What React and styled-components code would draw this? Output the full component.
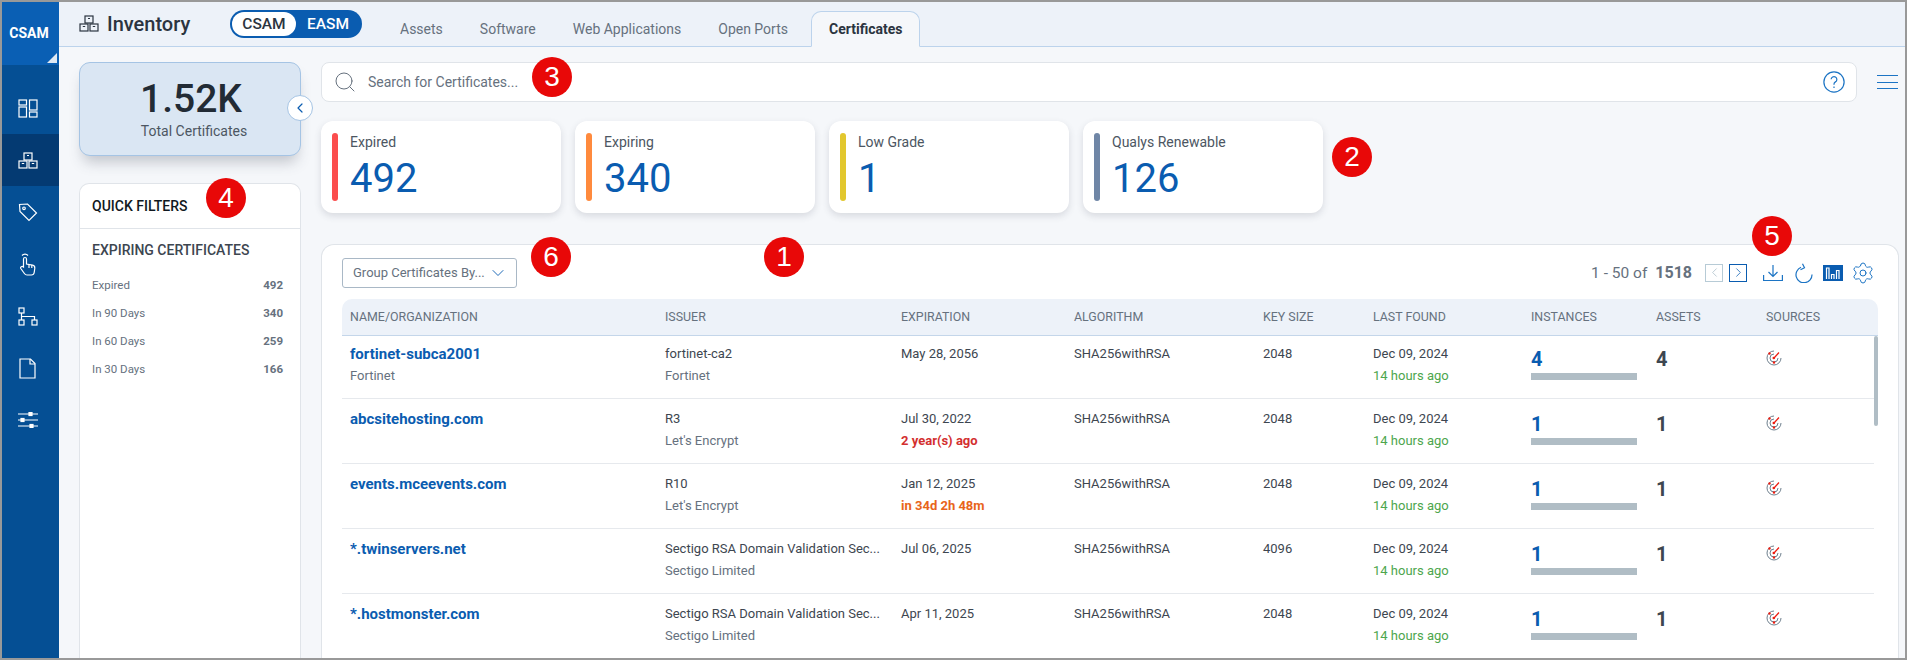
// App.jsx
import React from "react";
import styled, { createGlobalStyle } from "styled-components";
import { ChevronDown, ChevronLeft, ChevronRight, Search, Settings } from "lucide-react";

const GlobalStyle = createGlobalStyle`
  html, body {
    margin: 0;
    padding: 0;
    background: #fff;
  }
  * {
    box-sizing: border-box;
  }
`;

const Frame = styled.div`
  position: relative;
  display: flex;
  width: 1907px;
  height: 660px;
  border: 2px solid #999;
  overflow: hidden;
  font-family: Roboto, "Liberation Sans", sans-serif;
  color: #3d4650;
  background: #f5f7fa;
`;

const Sidebar = styled.aside`
  flex: 0 0 57px;
  display: flex;
  flex-direction: column;
  background: #054f94;
`;

const Brand = styled.div`
  position: relative;
  height: 63px;
  margin-bottom: 17px;
  padding-right: 3px;
  padding-bottom: 2px;
  display: flex;
  align-items: center;
  justify-content: center;
  background: #0a5fb4;
  color: #fff;
  font-size: 14px;
  font-weight: 700;
`;

const BrandCorner = styled.span`
  position: absolute;
  right: 2px;
  bottom: 2px;
  width: 0;
  height: 0;
  border-style: solid;
  border-width: 0 0 10px 10px;
  border-color: transparent transparent #dfe8f2 transparent;
`;

const NavItem = styled.div`
  height: 52px;
  padding-right: 6px;
  display: flex;
  align-items: center;
  justify-content: center;
  color: #fff;
  background: ${({ $active }) => ($active ? "#043a72" : "transparent")};
`;

const Content = styled.div`
  flex: 1;
  min-width: 0;
  display: flex;
  flex-direction: column;
`;

const TopBar = styled.header`
  flex: 0 0 45px;
  display: flex;
  align-items: flex-end;
  padding-left: 20px;
  background: #edf2f9;
  border-bottom: 1px solid #bcd3ec;
`;

const PageTitle = styled.div`
  display: flex;
  align-items: center;
  gap: 8px;
  height: 44px;
  padding-bottom: 1px;
  width: 151px;
  font-size: 20px;
  font-weight: 500;
  color: #2b3440;
`;

const Toggle = styled.div`
  display: flex;
  align-items: center;
  align-self: flex-start;
  margin-top: 8px;
  width: 132px;
  height: 28px;
  padding: 2px;
  border-radius: 14px;
  background: #0a5cb0;
  font-size: 15.5px;
  font-weight: 500;
`;

const ToggleOption = styled.span`
  width: 64px;
  height: 24px;
  display: flex;
  align-items: center;
  justify-content: center;
  border-radius: 12px;
  background: ${({ $on }) => ($on ? "#fff" : "transparent")};
  color: ${({ $on }) => ($on ? "#2b3440" : "#fff")};
`;

const Tabs = styled.nav`
  display: flex;
  align-items: flex-end;
  margin-left: 20px;
  margin-bottom: -1px;
`;

const Tab = styled.div`
  height: 36px;
  padding: 0 17px 1px;
  margin-right: 1px;
  margin-left: ${({ $active }) => ($active ? "4px" : "0")};
  display: flex;
  align-items: center;
  font-size: 14px;
  color: ${({ $active }) => ($active ? "#2b3440" : "#66717e")};
  font-weight: ${({ $active }) => ($active ? 700 : 400)};
  background: ${({ $active }) => ($active ? "#f5f7fa" : "transparent")};
  border: 1px solid ${({ $active }) => ($active ? "#bcd3ec" : "transparent")};
  border-bottom-color: ${({ $active }) => ($active ? "#f5f7fa" : "transparent")};
  border-radius: 10px 10px 0 0;
`;

const Body = styled.div`
  flex: 1;
  min-height: 0;
  display: flex;
  padding: 15px 0 0 20px;
`;

const LeftColumn = styled.div`
  flex: 0 0 222px;
  display: flex;
  flex-direction: column;
`;

const TotalCard = styled.div`
  position: relative;
  height: 94px;
  margin-bottom: 27px;
  display: flex;
  flex-direction: column;
  align-items: center;
  border: 1px solid #a5c4e4;
  border-radius: 11px;
  background: #dae6f3;
  box-shadow: 0 10px 14px -4px rgba(60, 70, 85, 0.28);
`;

const TotalValue = styled.div`
  margin: 15px 0 0 2px;
  font-size: 39px;
  line-height: 42px;
  font-weight: 500;
  color: #222b35;
`;

const TotalLabel = styled.div`
  margin: 3px 0 0 8px;
  font-size: 14px;
  color: #4c5662;
`;

const CollapseButton = styled.button`
  position: absolute;
  right: -13px;
  top: 32px;
  width: 26px;
  height: 26px;
  padding: 0;
  display: flex;
  align-items: center;
  justify-content: center;
  border: 1px solid #a5c4e4;
  border-radius: 50%;
  background: #fff;
  color: #0a5cb0;
`;

const FilterPanel = styled.section`
  flex: 1;
  background: #fff;
  border: 1px solid #e0e4e9;
  border-bottom: none;
  border-radius: 10px 10px 0 0;
`;

const FilterHeader = styled.div`
  height: 45px;
  padding: 0 12px 1px;
  display: flex;
  align-items: center;
  border-bottom: 1px solid #e0e4e9;
  font-size: 14px;
  font-weight: 500;
  color: #101820;
`;

const FilterGroup = styled.div`
  padding: 12px 12px 0;
`;

const FilterTitle = styled.div`
  margin-bottom: 12px;
  font-size: 14px;
  line-height: 18px;
  font-weight: 500;
  color: #3d4650;
`;

const FilterRow = styled.div`
  height: 28px;
  padding-right: 5px;
  display: flex;
  align-items: center;
  justify-content: space-between;
  font-size: 11.5px;
  color: #66717e;
`;

const FilterCount = styled.span`
  font-weight: 700;
`;

const MainColumn = styled.div`
  flex: 1;
  min-width: 0;
  margin-left: 20px;
  display: flex;
  flex-direction: column;
`;

const SearchRow = styled.div`
  display: flex;
  align-items: center;
  height: 40px;
`;

const SearchBar = styled.div`
  width: 1536px;
  height: 40px;
  padding: 0 11px;
  display: flex;
  align-items: center;
  background: #fff;
  border: 1px solid #e0e4e9;
  border-radius: 8px;
  color: #66717e;
`;

const Placeholder = styled.span`
  flex: 1;
  margin-left: 11px;
  font-size: 14px;
`;

const MenuLines = styled.div`
  margin-left: 20px;
  width: 21px;
  height: 14px;
  display: flex;
  flex-direction: column;
  justify-content: space-between;
  span {
    display: block;
    height: 1px;
    background: #1c74c4;
  }
`;

const StatRow = styled.div`
  display: flex;
  gap: 14px;
  margin-top: 19px;
`;

const StatCard = styled.div`
  width: 240px;
  height: 92px;
  padding: 12px 11px;
  display: flex;
  gap: 12px;
  background: #fff;
  border-radius: 12px;
  box-shadow: 0 3px 7px rgba(60, 70, 85, 0.16);
`;

const StatBar = styled.span`
  flex: 0 0 6px;
  height: 68px;
  border-radius: 3px;
  background: ${({ $color }) => $color};
`;

const StatLabel = styled.div`
  font-size: 14px;
  line-height: 18px;
  color: #4c5662;
`;

const StatValue = styled.div`
  margin-top: 6px;
  font-size: 40px;
  line-height: 44px;
  color: #0a5cb0;
`;

const Panel = styled.section`
  flex: 1;
  min-height: 0;
  width: 1578px;
  margin-top: 31px;
  padding: 12px 20px 0;
  background: #fff;
  border: 1px solid #e0e4e9;
  border-bottom: none;
  border-radius: 13px 13px 0 0;
`;

const PanelToolbar = styled.div`
  height: 31px;
  margin-bottom: 11px;
  display: flex;
  align-items: center;
`;

const GroupSelect = styled.div`
  width: 175px;
  height: 30px;
  padding: 0 8px 0 10px;
  display: flex;
  align-items: center;
  justify-content: space-between;
  font-size: 13px;
  color: #66717e;
  border: 1px solid #a9b8c6;
  border-radius: 3px;
  svg {
    color: #0a5cb0;
  }
`;

const Pager = styled.div`
  margin-left: auto;
  padding-right: 3px;
  display: flex;
  align-items: center;
  color: #1c74c4;
`;

const PagerText = styled.span`
  font-size: 15.5px;
  color: #66717e;
  margin-right: 13px;
  b {
    margin-left: 8px;
    font-size: 16px;
  }
`;

const PageButton = styled.span`
  width: 18px;
  height: 18px;
  margin-right: 6px;
  display: flex;
  align-items: center;
  justify-content: center;
  border: 1px solid ${({ $disabled }) => ($disabled ? "#b7cbd6" : "#0a5cb0")};
  color: ${({ $disabled }) => ($disabled ? "#a9bcc7" : "#0a5cb0")};
`;

const ToolIcon = styled.span`
  display: flex;
  margin-left: ${({ $gap }) => $gap}px;
`;

const TableWrap = styled.div`
  position: relative;
`;

const Columns = styled.div`
  display: grid;
  grid-template-columns: 315px 236px 173px 189px 110px 158px 125px 110px 1fr;
  & > * {
    padding-left: 8px;
    min-width: 0;
  }
`;

const HeadRow = styled(Columns)`
  height: 37px;
  padding-bottom: 1px;
  align-items: center;
  background: #edf2f9;
  border-bottom: 1px solid #c4d6ea;
  border-radius: 10px 10px 0 0;
  font-size: 12.4px;
  color: #66717e;
  text-transform: uppercase;
`;

const Row = styled(Columns)`
  height: ${({ $first }) => ($first ? "63px" : "65px")};
  padding-top: ${({ $first }) => ($first ? "7px" : "9px")};
  margin-right: 4px;
  border-bottom: 1px solid #e6e9ed;
`;

const NameLink = styled.div`
  font-size: 15px;
  line-height: 22px;
  font-weight: 700;
  color: #0a5cb0;
`;

const Line = styled.div`
  font-size: 13px;
  line-height: 22px;
  white-space: nowrap;
  color: ${({ $tone }) =>
    ({ soft: "#66717e", green: "#4da64d", red: "#d32f2f", orange: "#e8651a" }[$tone] || "#3d4650")};
  font-weight: ${({ $bold }) => ($bold ? 700 : 400)};
`;

const CountCell = styled.div`
  margin-top: 4px;
`;

const SourceCell = styled.div`
  margin-top: 7px;
`;

const Count = styled.div`
  font-size: 20px;
  line-height: 24px;
  font-weight: 700;
  color: ${({ $blue }) => ($blue ? "#0a5cb0" : "#3d4650")};
`;

const CountBar = styled.div`
  width: 106px;
  height: 7px;
  margin-top: 2px;
  background: #b0bdc5;
`;

const ScrollThumb = styled.div`
  position: absolute;
  right: 0;
  top: 37px;
  width: 4px;
  height: 90px;
  border-radius: 2px;
  background: #b0bdc5;
`;

const Badge = styled.span`
  position: absolute;
  left: ${({ $x }) => $x - 22}px;
  top: ${({ $y }) => $y - 22}px;
  width: 40px;
  height: 40px;
  display: flex;
  align-items: center;
  justify-content: center;
  border-radius: 50%;
  background: #e80808;
  color: #fff;
  font-family: "Liberation Sans", Arial, sans-serif;
  font-size: 28px;
`;

const stroke = { fill: "none", stroke: "currentColor", strokeWidth: 1.2 };

const BoxesIcon = ({ size = 20 }) => (
  <svg width={size} height={size * 0.85} viewBox="0 0 20 17" {...stroke}>
    <rect x="6" y="1" width="8" height="7" />
    <rect x="1" y="9" width="8" height="7" />
    <rect x="11" y="9" width="8" height="7" />
    <path d="M9 3.5h2M3.8 11.5h2.4M13.8 11.5h2.4" />
  </svg>
);

const DashIcon = () => (
  <svg width="20" height="19" viewBox="0 0 20 19" {...stroke}>
    <rect x="1" y="1" width="7.5" height="5" />
    <rect x="1" y="8" width="7.5" height="10" />
    <rect x="11.5" y="1" width="7.5" height="10" />
    <rect x="11.5" y="13" width="7.5" height="5" />
  </svg>
);

const TagIcon = () => (
  <svg width="20" height="20" viewBox="0 0 20 20" {...stroke}>
    <path d="M1.5 2.5 2 9.5l9 9 7.5-7.5-9-9z" />
    <circle cx="6" cy="6.3" r="1.3" />
  </svg>
);

const HandIcon = () => (
  <svg width="20" height="23" viewBox="0 0 20 23" {...stroke}>
    <path d="M4 2.5a4 4 0 0 1 6 0" />
    <path d="M5.5 14V6a1.5 1.5 0 0 1 3 0v5l6 1.2c1.5.4 2.5 1.4 2.3 3l-.6 4.3c-.2 1.6-1.2 2.5-2.8 2.5H9c-1.2 0-2-.6-2.6-1.5l-3.6-5c-.9-1.5 1.2-2.8 2.7-1.5z" />
    <path d="M11 11.5V15M13.8 12v3" />
  </svg>
);

const TreeIcon = () => (
  <svg width="20" height="19" viewBox="0 0 20 19" {...stroke}>
    <rect x="1" y="1" width="5" height="5" />
    <rect x="1" y="13" width="5" height="5" />
    <rect x="14" y="13" width="5" height="5" />
    <path d="M3.5 6v7M3.5 9.5h13v3.5" />
  </svg>
);

const FileIcon = () => (
  <svg width="17" height="21" viewBox="0 0 17 21" {...stroke}>
    <path d="M1 1h10.5L16 5.5V20H1z" />
    <path d="M11 1v5h5" />
  </svg>
);

const SlidersIcon = () => (
  <svg width="20" height="16" viewBox="0 0 20 16" fill="none" stroke="currentColor" strokeWidth="1.2">
    <path d="M0 2h20M0 8h20M0 14h20" />
    <rect x="11" y="0.5" width="3" height="3" fill="currentColor" />
    <rect x="3" y="6.5" width="3" height="3" fill="currentColor" />
    <rect x="12" y="12.5" width="3" height="3" fill="currentColor" />
  </svg>
);

const HelpIcon = () => (
  <svg width="22" height="22" viewBox="0 0 20 20" fill="none" stroke="#1c74c4" strokeWidth="1.1">
    <circle cx="10" cy="10" r="9.2" />
    <path d="M7.4 7.6a2.6 2.6 0 1 1 3.9 2.3c-.9.5-1.3 1-1.3 2v.5" />
    <path d="M10 14v1.4" />
  </svg>
);

const DownloadIcon = () => (
  <svg width="20" height="18" viewBox="0 0 20 18" fill="none" stroke="currentColor" strokeWidth="1.2">
    <path d="M10 1v11M5.5 8l4.5 4.5L14.5 8" />
    <path d="M.6 11v5.5h18.8V11" />
  </svg>
);

const RefreshIcon = () => (
  <svg width="18" height="20" viewBox="0 0 18 20" fill="none" stroke="currentColor" strokeWidth="1.2">
    <path d="M6 4.3a8 8 0 1 0 11 7.2" />
    <path d="M7.5 .8 9.5 4.8 5.5 6.8" />
  </svg>
);

const ChartIcon = () => (
  <svg width="20" height="16" viewBox="0 0 20 16">
    <rect width="20" height="16" fill="#0a5cb0" />
    <path d="M3.5 14V3H6v11M8.5 14V9.5H11V14M13.5 14V5.5H16V14" fill="none" stroke="#fff" strokeWidth="1.2" />
  </svg>
);

const RadarIcon = () => (
  <svg width="16" height="16" viewBox="0 0 16 16" fill="none">
    <path d="M8 1A7 7 0 1 0 15 8" stroke="#6e7f8d" strokeWidth="1" />
    <path d="M8 4A4 4 0 1 0 12 8" stroke="#6e7f8d" strokeWidth="1" />
    <path d="M8 8 13 2.5" stroke="#ee1c10" strokeWidth="1.2" />
    <circle cx="3.5" cy="3.5" r="1.2" fill="#ee1c10" />
    <circle cx="7.8" cy="8" r="1.3" fill="#ee1c10" />
    <circle cx="8" cy="12.5" r="1.2" fill="#ee1c10" />
  </svg>
);

const navIcons = [DashIcon, BoxesIcon, TagIcon, HandIcon, TreeIcon, FileIcon, SlidersIcon];

const tabs = ["Assets", "Software", "Web Applications", "Open Ports", "Certificates"];

const stats = [
  { label: "Expired", value: "492", color: "#fb4d4d" },
  { label: "Expiring", value: "340", color: "#ff8a3d" },
  { label: "Low Grade", value: "1", color: "#e2c72e" },
  { label: "Qualys Renewable", value: "126", color: "#6f86a6" },
];

const filters = [
  ["Expired", "492"],
  ["In 90 Days", "340"],
  ["In 60 Days", "259"],
  ["In 30 Days", "166"],
];

const headers = [
  "Name/Organization",
  "Issuer",
  "Expiration",
  "Algorithm",
  "Key Size",
  "Last Found",
  "Instances",
  "Assets",
  "Sources",
];

const sectigo = "Sectigo RSA Domain Validation Sec...";

const certs = [
  { name: "fortinet-subca2001", org: "Fortinet", issuer: "fortinet-ca2", issuerOrg: "Fortinet", date: "May 28, 2056", size: "2048", count: "4" },
  { name: "abcsitehosting.com", issuer: "R3", issuerOrg: "Let's Encrypt", date: "Jul 30, 2022", note: "2 year(s) ago", tone: "red", size: "2048", count: "1" },
  { name: "events.mceevents.com", issuer: "R10", issuerOrg: "Let's Encrypt", date: "Jan 12, 2025", note: "in 34d 2h 48m", tone: "orange", size: "2048", count: "1" },
  { name: "*.twinservers.net", issuer: sectigo, issuerOrg: "Sectigo Limited", date: "Jul 06, 2025", size: "4096", count: "1" },
  { name: "*.hostmonster.com", issuer: sectigo, issuerOrg: "Sectigo Limited", date: "Apr 11, 2025", size: "2048", count: "1" },
];

const badges = [
  { n: 1, x: 784, y: 257 },
  { n: 2, x: 1352, y: 157 },
  { n: 3, x: 552, y: 77 },
  { n: 4, x: 226, y: 198 },
  { n: 5, x: 1772, y: 236 },
  { n: 6, x: 551, y: 257 },
];

export default function App() {
  return (
    <Frame>
      <GlobalStyle />
      <Sidebar>
        <Brand>
          CSAM
          <BrandCorner />
        </Brand>
        {navIcons.map((Icon, i) => (
          <NavItem key={i} $active={i === 1}>
            <Icon />
          </NavItem>
        ))}
      </Sidebar>

      <Content>
        <TopBar>
          <PageTitle>
            <BoxesIcon />
            Inventory
          </PageTitle>
          <Toggle>
            <ToggleOption $on>CSAM</ToggleOption>
            <ToggleOption>EASM</ToggleOption>
          </Toggle>
          <Tabs>
            {tabs.map((t) => (
              <Tab key={t} $active={t === "Certificates"}>
                {t}
              </Tab>
            ))}
          </Tabs>
        </TopBar>

        <Body>
          <LeftColumn>
            <TotalCard>
              <TotalValue>1.52K</TotalValue>
              <TotalLabel>Total Certificates</TotalLabel>
              <CollapseButton>
                <ChevronLeft size={16} strokeWidth={1.8} />
              </CollapseButton>
            </TotalCard>
            <FilterPanel>
              <FilterHeader>QUICK FILTERS</FilterHeader>
              <FilterGroup>
                <FilterTitle>EXPIRING CERTIFICATES</FilterTitle>
                {filters.map(([label, count]) => (
                  <FilterRow key={label}>
                    <span>{label}</span>
                    <FilterCount>{count}</FilterCount>
                  </FilterRow>
                ))}
              </FilterGroup>
            </FilterPanel>
          </LeftColumn>

          <MainColumn>
            <SearchRow>
              <SearchBar>
                <Search size={24} strokeWidth={1} />
                <Placeholder>Search for Certificates...</Placeholder>
                <HelpIcon />
              </SearchBar>
              <MenuLines>
                <span />
                <span />
                <span />
              </MenuLines>
            </SearchRow>

            <StatRow>
              {stats.map((s) => (
                <StatCard key={s.label}>
                  <StatBar $color={s.color} />
                  <div>
                    <StatLabel>{s.label}</StatLabel>
                    <StatValue>{s.value}</StatValue>
                  </div>
                </StatCard>
              ))}
            </StatRow>

            <Panel>
              <PanelToolbar>
                <GroupSelect>
                  Group Certificates By...
                  <ChevronDown size={20} strokeWidth={1.1} />
                </GroupSelect>
                <Pager>
                  <PagerText>
                    1 - 50 of<b>1518</b>
                  </PagerText>
                  <PageButton $disabled>
                    <ChevronLeft size={15} strokeWidth={1.2} />
                  </PageButton>
                  <PageButton>
                    <ChevronRight size={15} strokeWidth={1.2} />
                  </PageButton>
                  <ToolIcon $gap={10}>
                    <DownloadIcon />
                  </ToolIcon>
                  <ToolIcon $gap={12}>
                    <RefreshIcon />
                  </ToolIcon>
                  <ToolIcon $gap={10}>
                    <ChartIcon />
                  </ToolIcon>
                  <ToolIcon $gap={8}>
                    <Settings size={24} strokeWidth={1} />
                  </ToolIcon>
                </Pager>
              </PanelToolbar>

              <TableWrap>
                <HeadRow>
                  {headers.map((h) => (
                    <span key={h}>{h}</span>
                  ))}
                </HeadRow>
                {certs.map((c, i) => (
                  <Row key={c.name} $first={i === 0}>
                    <div>
                      <NameLink>{c.name}</NameLink>
                      {c.org && <Line $tone="soft">{c.org}</Line>}
                    </div>
                    <div>
                      <Line>{c.issuer}</Line>
                      <Line $tone="soft">{c.issuerOrg}</Line>
                    </div>
                    <div>
                      <Line>{c.date}</Line>
                      {c.note && (
                        <Line $tone={c.tone} $bold>
                          {c.note}
                        </Line>
                      )}
                    </div>
                    <div>
                      <Line>SHA256withRSA</Line>
                    </div>
                    <div>
                      <Line>{c.size}</Line>
                    </div>
                    <div>
                      <Line>Dec 09, 2024</Line>
                      <Line $tone="green">14 hours ago</Line>
                    </div>
                    <CountCell>
                      <Count $blue>{c.count}</Count>
                      <CountBar />
                    </CountCell>
                    <CountCell>
                      <Count>{c.count}</Count>
                    </CountCell>
                    <SourceCell>
                      <RadarIcon />
                    </SourceCell>
                  </Row>
                ))}
                <ScrollThumb />
              </TableWrap>
            </Panel>
          </MainColumn>
        </Body>
      </Content>

      {badges.map((b) => (
        <Badge key={b.n} $x={b.x} $y={b.y}>
          {b.n}
        </Badge>
      ))}
    </Frame>
  );
}
